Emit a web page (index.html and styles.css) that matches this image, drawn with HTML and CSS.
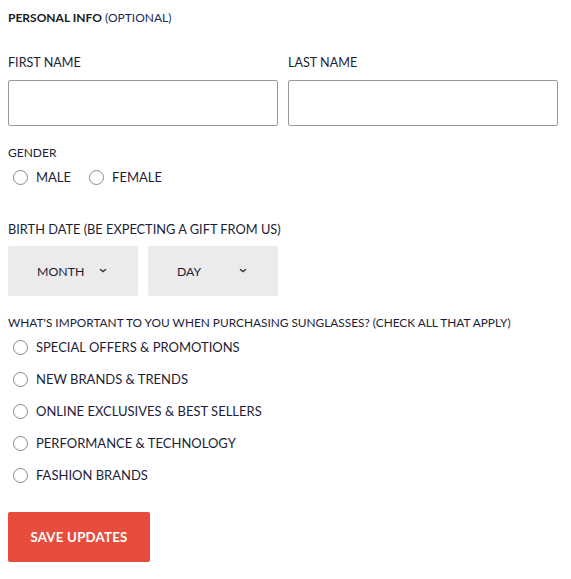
FILE: index.html
```html
<!DOCTYPE html>
<html>
<head>
<meta charset="utf-8">
<link rel="stylesheet" href="styles.css">
</head>
<body>
<form class="form">
  <h2 class="title"><strong>PERSONAL INFO</strong> <span class="opt">(OPTIONAL)</span></h2>
  <div class="names">
    <label class="field">
      <span class="label">FIRST NAME</span>
      <input class="input" type="text">
    </label>
    <label class="field">
      <span class="label">LAST NAME</span>
      <input class="input" type="text">
    </label>
  </div>
  <div class="group gender">
    <span class="label">GENDER</span>
    <div class="radios">
      <label class="radio"><span class="circle"></span>MALE</label>
      <label class="radio"><span class="circle"></span>FEMALE</label>
    </div>
  </div>
  <div class="group birth">
    <span class="label label-birth">BIRTH DATE (BE EXPECTING A GIFT FROM US)</span>
    <div class="selects">
      <div class="select"><span class="sel-text">MONTH</span><svg class="chev" width="8" height="5" viewBox="0 0 8 5"><path d="M1 1.2 L4 3.6 L7 1.2" fill="none" stroke="#333" stroke-width="1.4"/></svg></div>
      <div class="select"><span class="sel-text">DAY</span><svg class="chev" width="8" height="5" viewBox="0 0 8 5"><path d="M1 1.2 L4 3.6 L7 1.2" fill="none" stroke="#333" stroke-width="1.4"/></svg></div>
    </div>
  </div>
  <div class="group prefs">
    <span class="label label-q">WHAT'S IMPORTANT TO YOU WHEN PURCHASING SUNGLASSES? (CHECK ALL THAT APPLY)</span>
    <ul class="options">
      <li class="radio"><span class="circle"></span>SPECIAL OFFERS &amp; PROMOTIONS</li>
      <li class="radio"><span class="circle"></span>NEW BRANDS &amp; TRENDS</li>
      <li class="radio"><span class="circle"></span>ONLINE EXCLUSIVES &amp; BEST SELLERS</li>
      <li class="radio"><span class="circle"></span>PERFORMANCE &amp; TECHNOLOGY</li>
      <li class="radio"><span class="circle"></span>FASHION BRANDS</li>
    </ul>
  </div>
  <button class="save" type="button">SAVE UPDATES</button>
</form>
</body>
</html>
```
FILE: styles.css
```css
* { box-sizing: border-box; }
body {
  margin: 0;
  background: #fff;
  font-family: Lato, "Open Sans", sans-serif;
  color: #1d1d38;
  font-size: 13px;
}
.form {
  padding: 10px 8px 0 8px;
  display: flex;
  flex-direction: column;
}
.title {
  margin: 0;
  font-size: 12px;
  font-weight: 400;
  line-height: 16px;
  color: #1a1a1a;
}
.title strong { font-weight: 700; }
.opt { color: #1b2a5a; }
.names {
  display: flex;
  gap: 10px;
  margin-top: 29px;
}
.field {
  display: flex;
  flex-direction: column;
  width: 270px;
}
.label {
  display: block;
  font-size: 12.6px;
  line-height: 16px;
}
.label-birth { font-size: 12.8px; }
.label-q { font-size: 11.85px; }
.input {
  margin-top: 9px;
  height: 46px;
  width: 270px;
  border: 1px solid #999;
  border-radius: 2px;
  background: #fff;
}
.group { display: flex; flex-direction: column; }
.gender { margin-top: 19px; }
.gender .label { font-size: 12px; }
.radios { display: flex; margin-top: 7px; }
.radio {
  display: flex;
  align-items: center;
  height: 18px;
  font-size: 13px;
}
.radios .radio { margin-right: 13px; }
.circle {
  width: 15px;
  height: 15px;
  border: 1px solid #8a8a8a;
  border-radius: 50%;
  margin: 0 8px 0 5px;
  flex: none;
}
.birth { margin-top: 35px; }
.selects { display: flex; gap: 10px; margin-top: 9px; }
.select {
  width: 130px;
  height: 50px;
  background: #ebebeb;
  border-radius: 2px;
  display: flex;
  align-items: center;
  padding-left: 29px;
  position: relative;
  font-size: 12.3px;
}
.chev { position: absolute; left: 91px; top: 22px; }
.prefs { margin-top: 19px; }
.options {
  list-style: none;
  padding: 0;
  margin: 7px 0 0 0;
  display: flex;
  flex-direction: column;
  gap: 14px;
}
.save {
  margin-top: 28px;
  width: 142px;
  height: 50px;
  border: 0;
  border-radius: 2px;
  background: #e74c3c;
  color: #fff;
  font-family: Lato, sans-serif;
  font-weight: 700;
  font-size: 13.3px;
  letter-spacing: 0.2px;
  padding: 0;
}
```
